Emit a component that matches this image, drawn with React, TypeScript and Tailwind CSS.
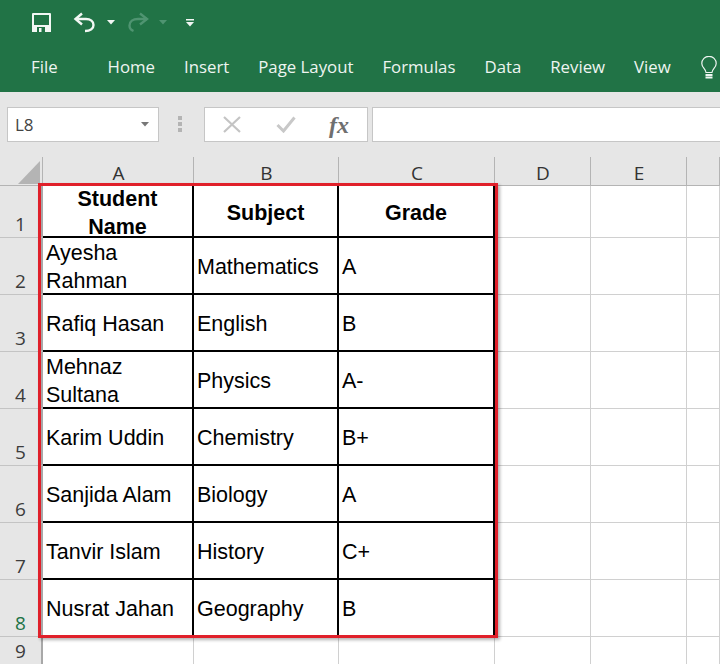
const tabs = [
  { label: "Home", left: "ml-[50px]" },
  { label: "Insert", left: "ml-[29px]" },
  { label: "Page Layout", left: "ml-[29px]" },
  { label: "Formulas", left: "ml-[29px]" },
  { label: "Data", left: "ml-[29px]" },
  { label: "Review", left: "ml-[29px]" },
  { label: "View", left: "ml-[29px]" },
];

const columns = ["A", "B", "C", "D", "E", ""];

const rows = [
  ["Ayesha Rahman", "Mathematics", "A"],
  ["Rafiq Hasan", "English", "B"],
  ["Mehnaz Sultana", "Physics", "A-"],
  ["Karim Uddin", "Chemistry", "B+"],
  ["Sanjida Alam", "Biology", "A"],
  ["Tanvir Islam", "History", "C+"],
  ["Nusrat Jahan", "Geography", "B"],
];

const Caret = ({ className }: { className: string }) => (
  <svg width="8" height="5" viewBox="0 0 8 5" className={className}>
    <path d="M0 0h8L4 4.500z" fill="currentColor" />
  </svg>
);

const QuickAccess = () => (
  <div className="flex h-[44px] items-center pl-[32px] text-[#f2f7f4]">
    <svg width="19" height="19" viewBox="0 0 19 19">
      <path d="M0 1A1 1 0 0 1 1 0h17a1 1 0 0 1 1 1v18H0z" fill="currentColor" />
      <rect x="2" y="2" width="15" height="10" fill="#217346" />
      <rect x="5" y="14" width="8" height="5" fill="#217346" />
      <rect x="7" y="15" width="2.500" height="4" fill="currentColor" />
    </svg>
    <svg width="23" height="21" viewBox="0 0 23 21" fill="none" className="ml-[22px]">
      <path d="M9 1.500 2.500 7 9 12.500" stroke="currentColor" strokeWidth="2.400" />
      <path d="M3 7h10c4.500 0 7.500 2.500 7.500 6s-3 6-8.500 6" stroke="currentColor" strokeWidth="2.400" />
    </svg>
    <Caret className="ml-[11px] mt-[1px]" />
    <svg width="23" height="21" viewBox="0 0 23 21" fill="none" className="ml-[12px] text-[#4f9471]">
      <path d="m13 1.500 7 5.500-7 5.500" stroke="currentColor" strokeWidth="2.400" />
      <path d="M20 7H11C6 7 2.500 9.500 2.500 13.500c0 2.500 1.500 4.500 4 5.500" stroke="currentColor" strokeWidth="2.400" />
    </svg>
    <Caret className="ml-[9px] mt-[1px] text-[#4f9471]" />
    <svg width="8" height="8" viewBox="0 0 8 8" className="ml-[19px] mt-[2px]">
      <rect width="8" height="1.500" fill="currentColor" />
      <path d="M0 3h8L4 7.500z" fill="currentColor" />
    </svg>
  </div>
);

const Ribbon = () => (
  <div className="h-[92px] overflow-hidden bg-[#217346] text-[#eef5f1] [font-family:'Open_Sans',sans-serif]">
    <QuickAccess />
    <div className="flex h-[46px] items-center pl-[31px] text-[16.800px] leading-none">
      <span>File</span>
      {tabs.map((tab) => (
        <span key={tab.label} className={tab.left}>
          {tab.label}
        </span>
      ))}
      <svg width="16" height="23" viewBox="0 0 16 23" fill="none" className="ml-[30px] shrink-0">
        <path
          d="M5 16.500C4.500 12.500.8 11.500.8 7.500a7.200 7.200 0 0 1 14.400 0c0 4-3.700 5-4.200 9z"
          stroke="currentColor"
          strokeWidth="1.200"
        />
        <path d="M4.500 19h7M4.500 21.500h7" stroke="currentColor" strokeWidth="1.800" />
      </svg>
    </div>
  </div>
);

const FormulaBar = () => (
  <div className="flex h-[65px] items-start bg-[#e6e6e6] pl-[7px] pt-[15px] [font-family:'Open_Sans',sans-serif]">
    <div className="flex h-[35px] w-[152px] items-center justify-between border border-[#c6c6c6] bg-white pl-[7px] pr-[9px] text-[17px] text-[#444]">
      <span>L8</span>
      <Caret className="text-[#777]" />
    </div>
    <div className="ml-[19px] mt-[9px] flex w-[4px] flex-col gap-[2px]">
      <span className="h-[4px] w-[4px] bg-[#b4b4b4]" />
      <span className="h-[4px] w-[4px] bg-[#b4b4b4]" />
      <span className="h-[4px] w-[4px] bg-[#b4b4b4]" />
    </div>
    <div className="ml-[22px] flex h-[35px] w-[164px] items-center border border-[#c6c6c6] bg-white">
      <svg width="18" height="17" viewBox="0 0 18 17" fill="none" className="ml-[18px]">
        <path d="m1 1 16 15M17 1 1 16" stroke="#c4c4c4" strokeWidth="2.200" />
      </svg>
      <svg width="20" height="17" viewBox="0 0 20 17" fill="none" className="ml-[35px]">
        <path d="m1.500 9 6 6L18.500 1.500" stroke="#c8c8c8" strokeWidth="3" />
      </svg>
      <span className="ml-[33px] text-[24px] font-bold italic leading-none text-[#6f6f6f] [font-family:'Liberation_Serif',serif]">
        fx
      </span>
    </div>
    <div className="ml-[4px] h-[35px] flex-1 border border-r-0 border-[#c6c6c6] bg-white" />
  </div>
);

const headerCell =
  "flex items-center justify-center border-r-2 border-b-2 border-black pt-[4px] text-center font-bold leading-[28px] text-black";
const dataCell = "flex items-center border-r-2 border-b-2 border-black pt-[2px] leading-[28px] text-black";
const emptyCell = "border-r border-b border-[#d0d0d0]";
const rowHead =
  "flex items-end justify-center border-r-2 border-b border-r-[#a8a8a8] border-b-[#c4c4c4] bg-[#e6e6e6] text-[19px] leading-[26px] text-[#3c3c3c] [font-family:'Open_Sans',sans-serif]";

const Sheet = () => (
  <div className="relative grid h-[508px] grid-cols-[43px_151px_145px_156px_96px_96px_33px] grid-rows-[29px_52px_repeat(7,57px)_28px] overflow-hidden bg-white text-[21.500px] [font-family:'Liberation_Sans',sans-serif]">
    <div className="relative border-r border-b border-[#b4b4b4] bg-[#e6e6e6]">
      <svg width="22" height="23" viewBox="0 0 22 23" className="absolute left-[18px] top-[4px]">
        <path d="M22 0v23H0z" fill="#b4b4b4" />
      </svg>
    </div>
    {columns.map((col) => (
      <div
        key={col || "F"}
        className="flex items-end justify-center border-r border-b border-[#b4b4b4] bg-[#e6e6e6] pl-[1px] text-[19px] leading-[24px] text-[#333] [font-family:'Open_Sans',sans-serif]"
      >
        {col}
      </div>
    ))}

    <div className={rowHead}>1</div>
    <div className={`${headerCell} px-[20px]`}>Student Name</div>
    <div className={headerCell}>Subject</div>
    <div className={headerCell}>Grade</div>
    <div className={emptyCell} />
    <div className={emptyCell} />
    <div className={emptyCell} />

    {rows.map((row, i) => (
      <div key={row[0]} className="contents">
        <div className={`${rowHead} ${i === 6 ? "border-r-[#217346] bg-[#d2d2d2] text-[#217346]" : ""}`}>{i + 2}</div>
        <div className={`${dataCell} pl-[3px] pr-[3px]`}>{row[0]}</div>
        <div className={`${dataCell} pl-[3px]`}>{row[1]}</div>
        <div className={`${dataCell} pl-[3px]`}>{row[2]}</div>
        <div className={emptyCell} />
        <div className={emptyCell} />
        <div className={emptyCell} />
      </div>
    ))}

    <div className={rowHead}>9</div>
    <div className={emptyCell} />
    <div className={emptyCell} />
    <div className={emptyCell} />
    <div className={emptyCell} />
    <div className={emptyCell} />
    <div className={emptyCell} />

    {/* red selection drawn over the table */}
    <div className="pointer-events-none absolute left-[38px] top-[26px] h-[455px] w-[460px] border-[3px] border-[#e0202a] shadow-[2px_2px_3px_rgba(0,0,0,0.3)]" />
  </div>
);

export default function App() {
  return (
    <div className="h-[664px] w-[720px] overflow-hidden bg-white">
      <Ribbon />
      <FormulaBar />
      <Sheet />
    </div>
  );
}
